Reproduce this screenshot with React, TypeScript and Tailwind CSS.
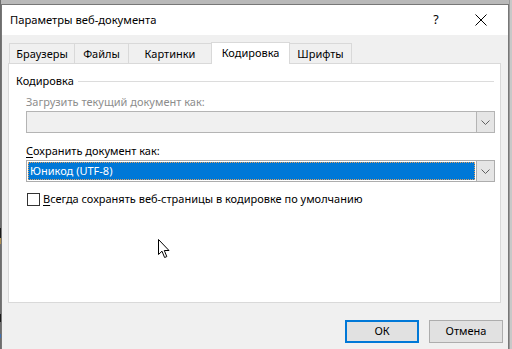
import React from "react";

const font = { fontFamily: '"Noto Sans", "Liberation Sans", sans-serif' };

function Chevron() {
  return (
    <svg width="9" height="5" viewBox="0 0 9 5" className="block">
      <path d="M0.5 0.5 L4.5 4.5 L8.5 0.5" fill="none" stroke="#606060" strokeWidth="1" />
    </svg>
  );
}

function Cursor() {
  return (
    <svg width="13" height="20" viewBox="0 0 13 20" className="absolute left-[158px] top-[239px]">
      <path
        d="M0.5 0.5 L0.5 15.5 L4 12.2 L6.6 18.5 L8.8 17.6 L6.3 11.5 L11 11.5 Z"
        fill="#ffffff"
        stroke="#000000"
        strokeWidth="1"
        strokeLinejoin="miter"
      />
    </svg>
  );
}

export default function App() {
  const tabs = [
    { label: "Браузеры", w: "w-[65px]" },
    { label: "Файлы", w: "w-[54px]" },
    { label: "Картинки", w: "w-[83px]" },
  ];
  return (
    <div className="relative w-[512px] h-[349px] overflow-hidden bg-[#b9b9b9] flex text-[11px] text-black" style={font}>
      {/* left desktop strip */}
      <div className="w-[1px] h-full bg-[#6d6d6d] flex flex-col">
        <div className="h-[228px]" />
        <div className="h-[10px] bg-[#1a1a1a]" />
        <div className="h-[6px] bg-[#b09050]" />
        <div className="h-[70px]" />
        <div className="h-[8px] bg-[#1a1a1a]" />
        <div className="h-[12px]" />
        <div className="h-[4px] bg-[#4070b0]" />
      </div>
      {/* dialog */}
      <div className="mt-[4px] w-[508px] h-[345px] border-t border-l border-r border-[#777777] flex flex-col bg-[#f0f0f0]">
        {/* title bar */}
        <div className="h-[30px] bg-white flex items-center shrink-0">
          <div className="pl-[8px] flex-1 text-[11.2px]">Параметры веб-документа</div>
          <div className="w-[20px] text-center mr-[25px] text-[12.5px]">?</div>
          <div className="w-[20px] flex justify-center mr-[17px]">
            <svg width="12" height="12" viewBox="0 0 12 12">
              <path d="M0.5 0.5 L11.5 11.5 M11.5 0.5 L0.5 11.5" stroke="#000" strokeWidth="1" />
            </svg>
          </div>
        </div>
        {/* body */}
        <div className="flex-1 flex flex-col pl-[6px]">
          {/* tabs */}
          <div className="flex items-end h-[28px] pl-[1px] pt-[6px]">
            {tabs.map((t) => (
              <div
                key={t.label}
                className={`${t.w} h-[20px] border-t border-l border-[#d9d9d9] bg-[#f0f0f0] flex items-center justify-center pt-[1px]`}
              >
                {t.label}
              </div>
            ))}
            <div className="w-[79px] h-[22px] border-t border-l border-r border-[#d9d9d9] bg-white flex items-center justify-center relative z-10 -mb-px">
              Кодировка
            </div>
            <div className="w-[62px] h-[20px] border-t border-r border-[#d9d9d9] bg-[#f0f0f0] flex items-center justify-center pt-[1px]">
              Шрифты
            </div>
          </div>
          {/* panel */}
          <div className="w-[493px] h-[240px] bg-white border border-[#d9d9d9] flex flex-col pl-[7px] pr-[6px]">
            <div className="flex items-center h-[18px] mt-[8px]">
              <span className="pr-[4px]">Кодировка</span>
              <div className="flex-1 h-px bg-[#dcdcdc]" />
            </div>
            <div className="pl-[10px] pr-[0px] flex flex-col">
              <div className="text-[#8d8d8d] h-[18px] mt-[3px] flex items-center">Загрузить текущий документ как:</div>
              <div className="w-[469px] h-[22px] border border-[#b4b4b4] bg-[#f0f0f0] flex justify-end">
                <div className="w-[18px] h-full border-l border-[#b4b4b4] bg-[#e5e5e5] flex items-center justify-center">
                  <Chevron />
                </div>
              </div>
              <div className="h-[18px] mt-[9px] flex items-center">
                <span>
                  <span className="underline underline-offset-2">С</span>охранить документ как:
                </span>
              </div>
              <div className="w-[469px] h-[22px] border border-[#adadad] bg-white flex">
                <div className="flex-1 p-[1px]">
                  <div className="h-full bg-[#0078d7] border border-dotted border-[#e0a060] text-white flex items-center pl-[1px]">
                    Юникод (UTF-8)
                  </div>
                </div>
                <div className="w-[18px] h-full border-l border-[#adadad] bg-[#e5e5e5] flex items-center justify-center">
                  <Chevron />
                </div>
              </div>
              <div className="flex items-center mt-[9px] h-[16px]">
                <div className="w-[13px] h-[13px] border border-[#333333] bg-white ml-[1px]" />
                <span className="ml-[3px]">
                  <span className="underline underline-offset-2">В</span>сегда сохранять веб-страницы в кодировке по умолчанию
                </span>
              </div>
            </div>
          </div>
          {/* buttons */}
          <div className="flex justify-end mt-[17px] pr-[5px] gap-[10px]">
            <div className="w-[74px] h-[23px] border-2 border-[#0078d7] bg-[#e1e1e1] flex items-center justify-center">ОК</div>
            <div className="w-[74px] h-[23px] border border-[#adadad] bg-[#e1e1e1] flex items-center justify-center">Отмена</div>
          </div>
        </div>
      </div>
      {/* right desktop strip */}
      <div className="flex-1 h-full bg-[#c8c8c8] border-l border-[#9a9a9a]" />
      <Cursor />
    </div>
  );
}
